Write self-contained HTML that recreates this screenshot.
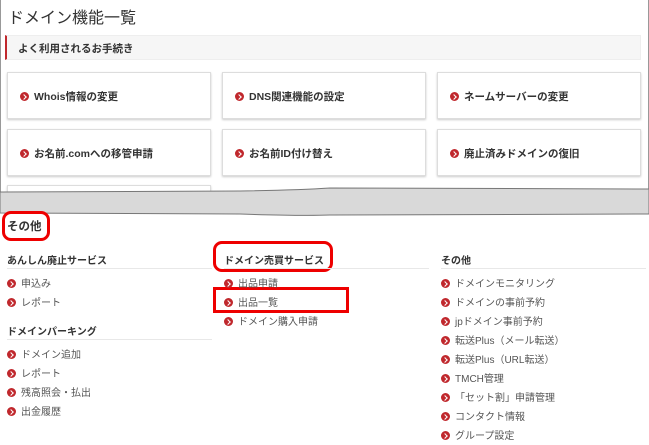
<!DOCTYPE html>
<html><head><meta charset="utf-8"><style>
*{margin:0;padding:0;box-sizing:border-box}
body{width:649px;height:445px;background:#fff;font-family:"Liberation Sans","Noto Sans CJK JP",sans-serif;color:#333;position:relative;overflow:hidden}
.a{position:absolute}
.top{left:0;top:0;width:649px;height:200px;border-left:1px solid #999;border-right:1px solid #999}
.title{left:8px;top:4px;font-size:16px;color:#333}
.bar{left:5px;top:35px;width:636px;height:25px;background:#f6f6f6;border:1px solid #eee;border-left:2px solid #c0282d;font-size:10.5px;font-weight:bold;padding:5px 0 0 11px}
.card{width:204px;height:47px;border:1px solid #ddd;box-shadow:0 1px 2px #ccc;font-size:10.5px;font-weight:bold;padding:16px 0 0 12px;background:#fff}
.b{display:inline-block;width:9px;height:9px;border-radius:50%;background:#c0282d;position:relative;vertical-align:-1px;margin-right:5px}
.b:after{content:"";position:absolute;left:2px;top:2.5px;width:3px;height:3px;border-right:1.3px solid #fff;border-top:1.3px solid #fff;transform:rotate(45deg)}
.it{font-size:10px;color:#555;white-space:nowrap}
.h{font-size:10px;font-weight:bold;color:#333}
.ln{height:1px;background:#e8e8e8}
.red{border:3.5px solid #e00}
</style></head><body>
<div class="a top"></div>
<div class="a title">ドメイン機能一覧</div>
<div class="a bar">よく利用されるお手続き</div>
<div class="a card" style="left:7px;top:72px"><span class="b"></span>Whois情報の変更</div>
<div class="a card" style="left:222px;top:72px"><span class="b"></span>DNS関連機能の設定</div>
<div class="a card" style="left:437px;top:72px"><span class="b"></span>ネームサーバーの変更</div>
<div class="a card" style="left:7px;top:129px"><span class="b"></span>お名前.comへの移管申請</div>
<div class="a card" style="left:222px;top:129px"><span class="b"></span>お名前ID付け替え</div>
<div class="a card" style="left:437px;top:129px"><span class="b"></span>廃止済みドメインの復旧</div>
<div class="a card" style="left:7px;top:185px;height:20px"></div>
<svg class="a" style="left:0;top:186px" width="649" height="30"><path d="M0 6 L240 5 Q300 4 330 2 L649 3 L649 28 L330 29 Q300 30 240 28 L0 27 Z" fill="#d9d9d9" stroke="#777" stroke-width="1"/></svg>
<div class="a red" style="left:2px;top:211px;width:48px;height:30px;border-radius:9px"></div>
<div class="a h" style="left:7px;top:218px;font-size:11.5px">その他</div>
<div class="a red" style="left:213px;top:241px;width:120px;height:31px;border-radius:9px"></div>
<div class="a h" style="left:7px;top:252px">あんしん廃止サービス</div>
<div class="a ln" style="left:7px;top:268px;width:205px"></div>
<div class="a h" style="left:224px;top:252px">ドメイン売買サービス</div>
<div class="a ln" style="left:224px;top:268px;width:205px"></div>
<div class="a h" style="left:441px;top:252px">その他</div>
<div class="a ln" style="left:441px;top:268px;width:205px"></div>
<div class="a it" style="left:7px;top:275px"><span class="b"></span>申込み</div>
<div class="a it" style="left:7px;top:294px"><span class="b"></span>レポート</div>
<div class="a h" style="left:7px;top:323px">ドメインパーキング</div>
<div class="a ln" style="left:7px;top:339px;width:205px"></div>
<div class="a it" style="left:7px;top:346px"><span class="b"></span>ドメイン追加</div>
<div class="a it" style="left:7px;top:365px"><span class="b"></span>レポート</div>
<div class="a it" style="left:7px;top:384px"><span class="b"></span>残高照会・払出</div>
<div class="a it" style="left:7px;top:403px"><span class="b"></span>出金履歴</div>
<div class="a red" style="left:213px;top:287px;width:136px;height:26px"></div>
<div class="a it" style="left:224px;top:275px"><span class="b"></span>出品申請</div>
<div class="a it" style="left:224px;top:294px"><span class="b"></span>出品一覧</div>
<div class="a it" style="left:224px;top:313px"><span class="b"></span>ドメイン購入申請</div>
<div class="a it" style="left:441px;top:275px"><span class="b"></span>ドメインモニタリング</div>
<div class="a it" style="left:441px;top:294px"><span class="b"></span>ドメインの事前予約</div>
<div class="a it" style="left:441px;top:313px"><span class="b"></span>jpドメイン事前予約</div>
<div class="a it" style="left:441px;top:332px"><span class="b"></span>転送Plus（メール転送）</div>
<div class="a it" style="left:441px;top:351px"><span class="b"></span>転送Plus（URL転送）</div>
<div class="a it" style="left:441px;top:370px"><span class="b"></span>TMCH管理</div>
<div class="a it" style="left:441px;top:389px"><span class="b"></span>「セット割」申請管理</div>
<div class="a it" style="left:441px;top:408px"><span class="b"></span>コンタクト情報</div>
<div class="a it" style="left:441px;top:427px"><span class="b"></span>グループ設定</div>
</body></html>
